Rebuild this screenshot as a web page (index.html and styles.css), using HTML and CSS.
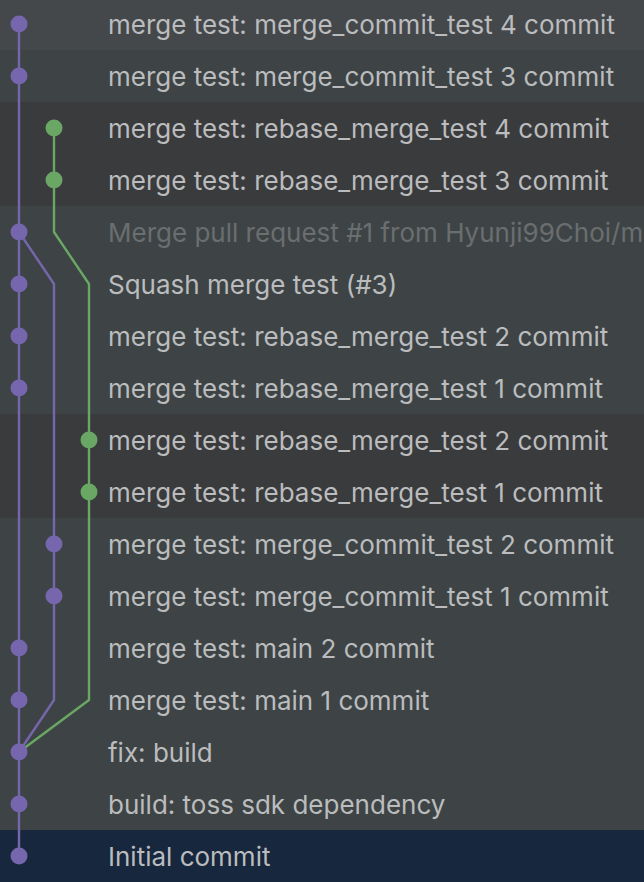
FILE: index.html
```html
<!DOCTYPE html>
<html>
<head>
<meta charset="utf-8">
<link rel="stylesheet" href="styles.css">
</head>
<body>
<div class="log">
  <svg class="graph" width="120" height="882" viewBox="0 0 120 882" xmlns="http://www.w3.org/2000/svg">
    <g fill="none" stroke-width="2.4" stroke-linejoin="round">
      <path class="purple" d="M19 24 V856"/>
      <path class="purple" d="M19 232 L54 284 V700 L19 752"/>
      <path class="green" d="M54 128 V232 L89 284 V700 L19 752"/>
    </g>
    <g class="purple-dot">
      <circle cx="19" cy="24" r="8.5"/>
      <circle cx="19" cy="76" r="8.5"/>
      <circle cx="19" cy="232" r="8.5"/>
      <circle cx="19" cy="284" r="8.5"/>
      <circle cx="19" cy="336" r="8.5"/>
      <circle cx="19" cy="388" r="8.5"/>
      <circle cx="54" cy="544" r="8.5"/>
      <circle cx="54" cy="596" r="8.5"/>
      <circle cx="19" cy="648" r="8.5"/>
      <circle cx="19" cy="700" r="8.5"/>
      <circle cx="19" cy="752" r="8.5"/>
      <circle cx="19" cy="804" r="8.5"/>
      <circle cx="19" cy="856" r="8.5"/>
    </g>
    <g class="green-dot">
      <circle cx="54" cy="128" r="8.5"/>
      <circle cx="54" cy="180" r="8.5"/>
      <circle cx="89" cy="440" r="8.5"/>
      <circle cx="89" cy="492" r="8.5"/>
    </g>
  </svg>
  <div class="row hover">merge test: merge_commit_test 4 commit</div>
  <div class="row">merge test: merge_commit_test 3 commit</div>
  <div class="row dark">merge test: rebase_merge_test 4 commit</div>
  <div class="row dark">merge test: rebase_merge_test 3 commit</div>
  <div class="row dim">Merge pull request #1 from Hyunji99Choi/merge_commit_test</div>
  <div class="row">Squash merge test (#3)</div>
  <div class="row">merge test: rebase_merge_test 2 commit</div>
  <div class="row">merge test: rebase_merge_test 1 commit</div>
  <div class="row dark">merge test: rebase_merge_test 2 commit</div>
  <div class="row dark">merge test: rebase_merge_test 1 commit</div>
  <div class="row">merge test: merge_commit_test 2 commit</div>
  <div class="row">merge test: merge_commit_test 1 commit</div>
  <div class="row">merge test: main 2 commit</div>
  <div class="row">merge test: main 1 commit</div>
  <div class="row">fix: build</div>
  <div class="row">build: toss sdk dependency</div>
  <div class="row selected">Initial commit</div>
</div>
</body>
</html>
```
FILE: styles.css
```css
html, body {
  margin: 0;
  padding: 0;
  background: #3e4445;
  overflow: hidden;
}
.log {
  position: relative;
  width: 644px;
  height: 882px;
  overflow: hidden;
  display: flex;
  flex-direction: column;
}
.graph {
  position: absolute;
  top: 0;
  left: 0;
  z-index: 1;
}
.purple { stroke: #7566ad; }
.green { stroke: #6aa765; }
.purple-dot { fill: #7566ad; }
.green-dot { fill: #6aa765; }
.row {
  flex: 0 0 52px;
  height: 52px;
  box-sizing: border-box;
  padding-left: 108px;
  display: flex;
  align-items: center;
  white-space: nowrap;
  font-family: Inter, "Liberation Sans", sans-serif;
  font-size: 26px;
  color: #bbbcbe;
  background: #3e4445;
}
.row:first-of-type { margin-top: -2px; }
.hover { background: #45484b; }
.dark { background: #3a3b3d; }
.dim { color: #6a6e70; }
.selected { background: #17273d; }
```
